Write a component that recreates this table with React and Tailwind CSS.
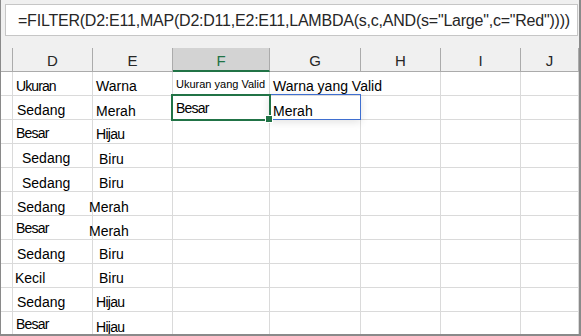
import React from "react";

const cols = ["D", "E", "F", "G", "H", "I", "J"];

// [text, classes] for D and E columns
const rows = [
  [["Ukuran", "pl-[3px] pt-[6px] tracking-[-0.9px]"], ["Warna", "pl-[3px] pt-[6px]"]],
  [["Sedang", "pl-[4px] pt-[6px]"], ["Merah", "pl-[3px] pt-[7px]"]],
  [["Besar", "pl-[3px] pt-[5px] tracking-[-0.8px]"], ["Hijau", "pl-[3px] pt-[6px] tracking-[-0.7px]"]],
  [["Sedang", "pl-[9px] pt-[6px]"], ["Biru", "pl-[6px] pt-[7px]"]],
  [["Sedang", "pl-[9px] pt-[7px]"], ["Biru", "pl-[6px] pt-[7px]"]],
  [["Sedang", "pl-[4px] pt-[7px]"], ["Merah", "ml-[-4px] pt-[7px]"]],
  [["Besar", "pl-[3px] pt-[4px] tracking-[-0.8px]"], ["Merah", "ml-[-4px] pt-[7px]"]],
  [["Sedang", "pl-[4px] pt-[6px]"], ["Biru", "pl-[6px] pt-[6px]"]],
  [["Kecil", "pl-[2px] pt-[6px]"], ["Biru", "pl-[6px] pt-[6px]"]],
  [["Sedang", "pl-[4px] pt-[6px]"], ["Hijau", "pl-[3px] pt-[6px] tracking-[-0.7px]"]],
  [["Besar", "pl-[3px] pt-[4px] tracking-[-0.8px]"], ["Hijau", "pl-[3px] pt-[7px] tracking-[-0.7px]"]],
];

const cell = "h-[24px] bg-white border-r border-b border-[#dadada]";

function Txt({ children, className = "" }) {
  return (
    <div className={"text-[14px] leading-4 whitespace-nowrap text-black " + className}>
      {children}
    </div>
  );
}

export default function App() {
  return (
    <div className="w-[581px] h-[336px] overflow-hidden bg-[#f0f0f0] border-l border-r-2 border-b-2 border-[#8a8a8a] flex flex-col font-['Liberation_Sans',Arial,sans-serif]">
      {/* formula bar */}
      <div className="h-[48px] shrink-0 pt-[4px] pl-[4px] pr-[1px]">
        <div className="h-[32px] bg-white border border-[#c6c6c6] pl-[12px] pt-[2px] overflow-hidden">
          <div className="text-[16px] leading-[28px] tracking-[-0.22px] text-[#262626] whitespace-nowrap">
            =FILTER(D2:E11,MAP(D2:D11,E2:E11,LAMBDA(s,c,AND(s="Large",c="Red"))))
          </div>
        </div>
      </div>

      <div className="grid grid-cols-[12px_80px_80px_97px_91px_80px_80px_1fr]">
        {/* header row */}
        <div className="h-[24px] border-r border-b border-[#ababab]" />
        {cols.map((c) =>
          c === "F" ? (
            <div
              key={c}
              className="h-[24px] bg-[#d3d3d3] border-r border-b-2 border-r-[#ababab] border-b-[#217346] text-center"
            >
              <div className="text-[15px] leading-[22px] pt-[2px] text-[#217346]">{c}</div>
            </div>
          ) : (
            <div key={c} className="h-[24px] border-r border-b border-[#ababab] text-center">
              <div className="text-[15px] leading-[22px] pt-[2px] text-[#262626]">{c}</div>
            </div>
          )
        )}

        {/* body rows */}
        {rows.map((r, i) => (
          <React.Fragment key={i}>
            <div className={cell} />
            <div className={cell}>
              <Txt className={r[0][1]}>{r[0][0]}</Txt>
            </div>
            <div className={cell}>
              <Txt className={r[1][1]}>{r[1][0]}</Txt>
            </div>
            {i === 0 ? (
              <>
                <div className={cell}>
                  <div className="text-[11px] leading-[13px] pl-[3px] pt-[6px] text-black whitespace-nowrap">
                    Ukuran yang Valid
                  </div>
                </div>
                <div className="h-[24px] bg-white border-b border-[#dadada]">
                  <Txt className="relative z-10 pl-[3px] pt-[6px]">Warna yang Valid</Txt>
                </div>
              </>
            ) : i === 1 ? (
              <>
                <div className={cell + " relative"}>
                  <Txt className="pl-[3px] pt-[4px] tracking-[-0.8px]">Besar</Txt>
                  <div className="absolute left-[-2px] top-[-2px] w-[100px] h-[27px] border-2 border-[#217346] z-20">
                    <div className="absolute right-[-4px] bottom-[-4px] w-[6px] h-[6px] bg-[#217346] border border-white box-content" />
                  </div>
                </div>
                <div className={cell + " relative"}>
                  <div className="absolute left-[-1px] top-[-2px] right-[-1px] bottom-[-1px] border border-[#3f6fd0] shadow-[0_2px_8px_rgba(0,0,0,0.12)] z-10" />
                  <Txt className="relative z-10 pl-[3px] pt-[7px]">Merah</Txt>
                </div>
              </>
            ) : (
              <>
                <div className={cell} />
                <div className={cell} />
              </>
            )}
            <div className={cell} />
            <div className={cell} />
            <div className={cell} />
          </React.Fragment>
        ))}
      </div>
    </div>
  );
}
